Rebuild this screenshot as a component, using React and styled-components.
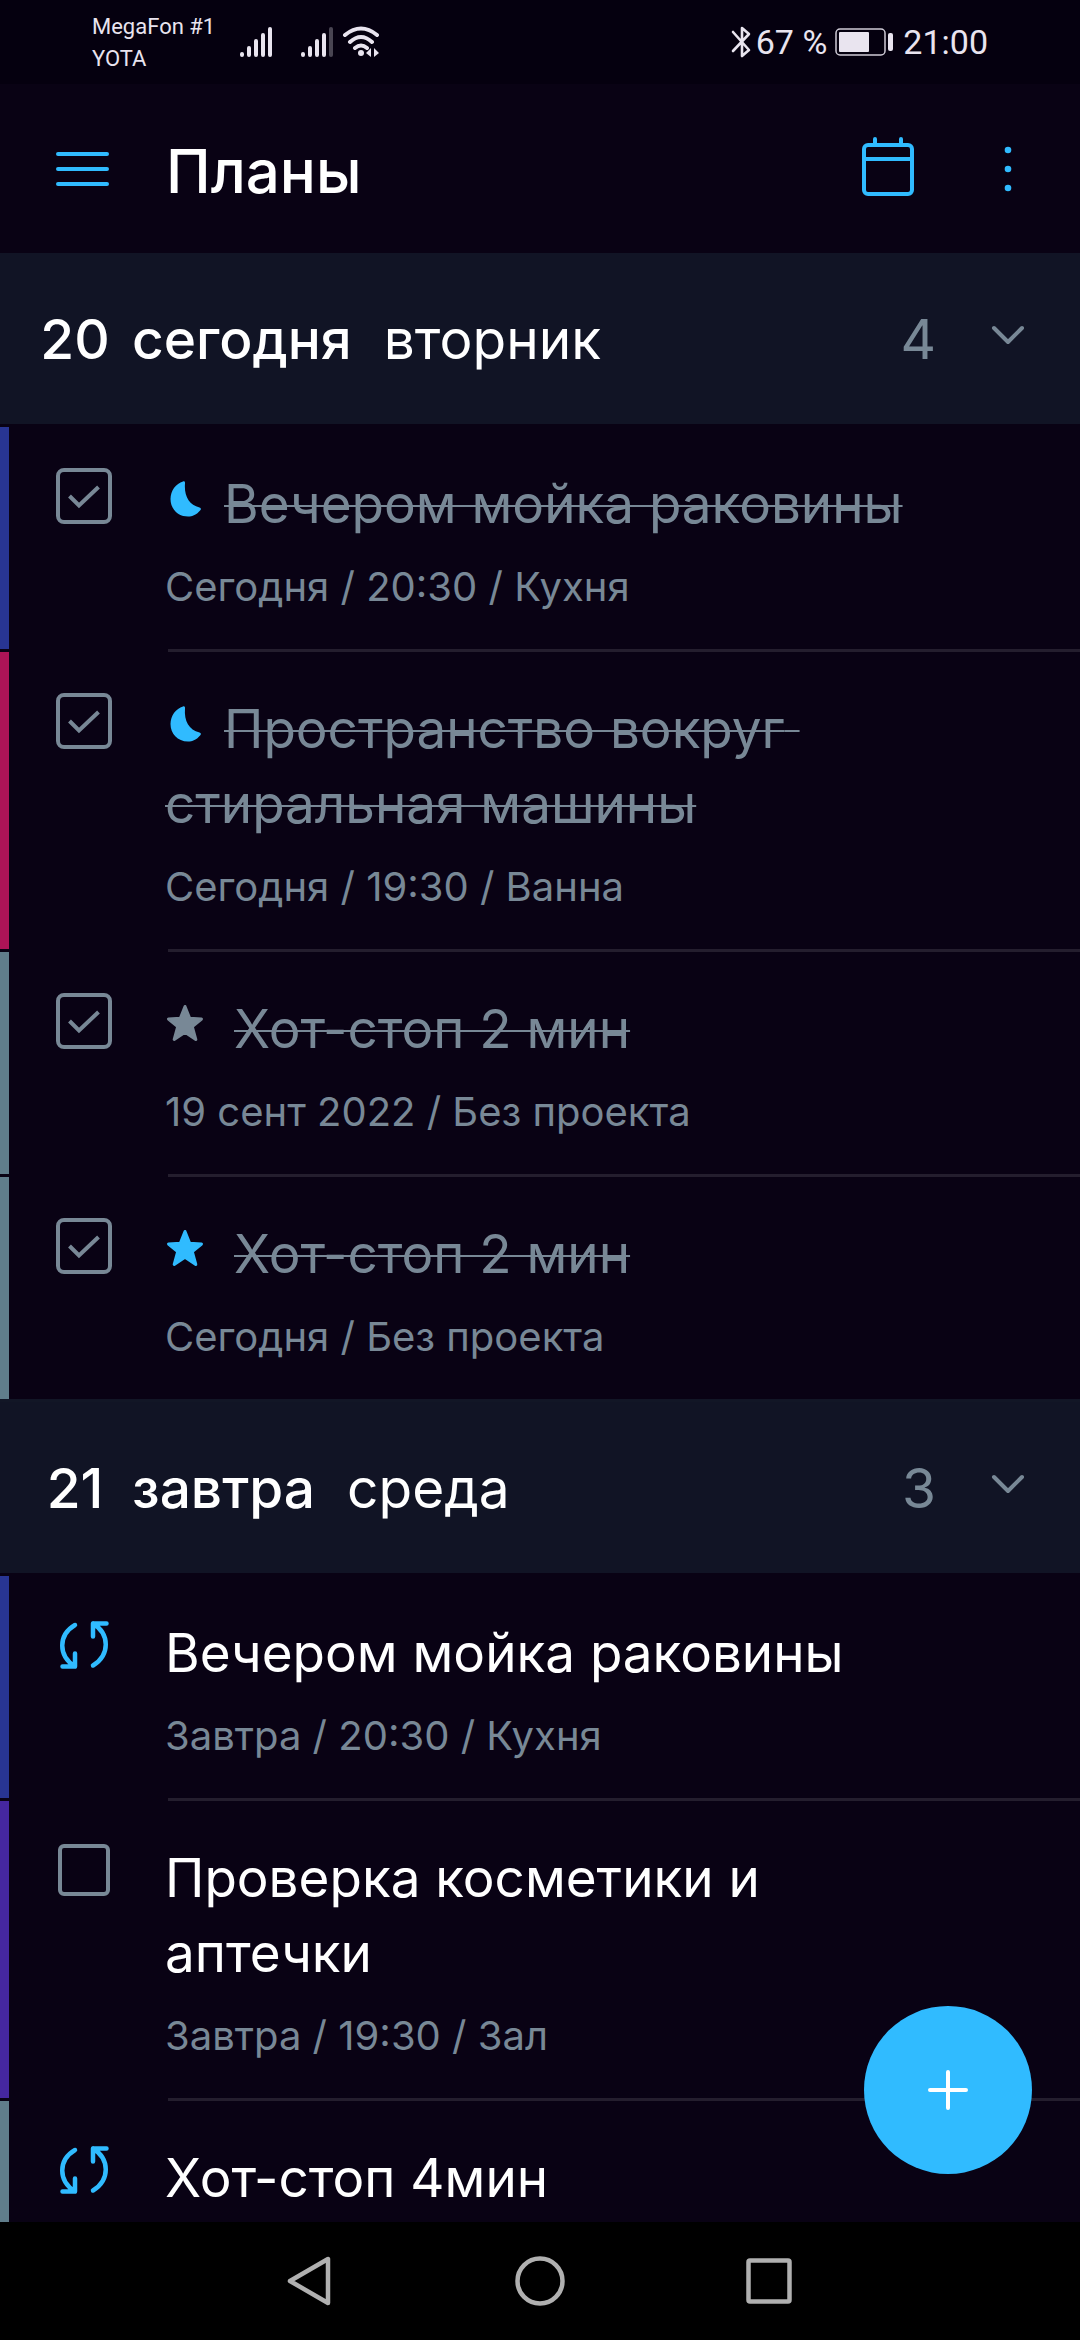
import React, { useState } from 'react'
import styled, { createGlobalStyle } from 'styled-components';

const accent = '#30bbff';
const muted = '#788896';

const days = [
  {
    id: 'today',
    number: 20,
    name: 'сегодня',
    weekday: 'вторник',
    count: 4,
    tasks: [
      { id: 1, title: 'Вечером мойка раковины', meta: 'Сегодня / 20:30 / Кухня', color: '#283593', done: true, mark: 'moon' },
      { id: 2, title: 'Пространство вокруг стиральная машины', meta: 'Сегодня / 19:30 / Ванна', color: '#ad1457', done: true, mark: 'moon' },
      { id: 3, title: 'Хот-стоп 2 мин', meta: '19 сент 2022 / Без проекта', color: '#607d8b', done: true, mark: 'star', markColor: muted },
      { id: 4, title: 'Хот-стоп 2 мин', meta: 'Сегодня / Без проекта', color: '#607d8b', done: true, mark: 'star' },
    ],
  },
  {
    id: 'tomorrow',
    number: 21,
    name: 'завтра',
    weekday: 'среда',
    count: 3,
    tasks: [
      { id: 5, title: 'Вечером мойка раковины', meta: 'Завтра / 20:30 / Кухня', color: '#283593', repeat: true },
      { id: 6, title: 'Проверка косметики и аптечки', meta: 'Завтра / 19:30 / Зал', color: '#4527a0' },
      { id: 7, title: 'Хот-стоп 4мин', color: '#607d8b', repeat: true },
    ],
  },
];


function Signal({ weak }) {
  return (
    <svg width="34" height="34" viewBox="0 0 34 34" fill="none" stroke="#e9e4ef" strokeWidth="4" strokeLinecap="round">
      <path d="M3 29V30M10 23V30M17 16V30M24 10V30" />
      <path d="M31 4V30" opacity={weak ? 0.3 : 1} />
    </svg>
  )
}

function Wifi() {
  return (
    <svg width="38" height="34" viewBox="0 0 38 34" fill="none" stroke="#e9e4ef" strokeWidth="4" strokeLinecap="round">
      <path d="M3 10Q19 -3 35 10M8 17Q19 7 30 17M13 23Q19 18 25 23" />
      <circle cx="19" cy="28" r="3" fill="#e9e4ef" stroke="none" />
      <path d="M24 28L29 23V32ZM32 23V32L37 28Z" fill="#e9e4ef" stroke="none" />
    </svg>
  )
}

function Bluetooth() {
  return (
    <svg width="20" height="34" viewBox="0 0 20 34" fill="none" stroke="#e9e4ef" strokeWidth="2.6" strokeLinejoin="round" strokeLinecap="round">
      <path d="M2 7L18 25L11 31V3L18 9L2 26" />
    </svg>
  )
}

function Battery() {
  return (
    <svg width="60" height="28" viewBox="0 0 60 28" fill="none">
      <rect x="1" y="1" width="49" height="26" rx="4" stroke="#cfcad6" strokeWidth="1.5" />
      <rect x="4" y="4" width="30" height="20" rx="1" fill="#e9e4ef" />
      <rect x="53" y="5" width="5" height="18" rx="2" fill="#e9e4ef" />
    </svg>
  )
}

function Mark({ type, color }) {
  if (type === 'moon') {
    return (
      <Moon viewBox="0 0 32 36" fill={color}>
        <path d="M13 .5C14.500 0 15.200 1 15 2.500C14 15 19 24 29.500 26.500C31 27 31.300 28 30.300 29.300C26.500 34 22.500 35.500 18 35.500C7.500 35.500 .5 27.500 .5 18C.5 9.500 6 2.500 13 .5Z" />
      </Moon>
    )
  }
  return (
    <Star viewBox="0 0 38 38" fill={color} stroke={color} strokeWidth="3" strokeLinejoin="round">
      <path d="M19 2.500L23.700 14.300L35.500 15L26.300 22.700L29.800 35.500L19 28.300L8.200 35.500L11.700 22.700L2.500 15L14.300 14.300Z" />
    </Star>
  )
}

function Task({ task }) {
  const [done, setDone] = useState(Boolean(task.done));
  const id = `task-${task.id}`;

  return (
    <Row>
      <Stripe $color={task.color} />
      <Control>
        {task.repeat ? (
          <IconButton id={id} aria-label="Повтор">
            <svg width="52" height="52" viewBox="0 0 52 52" fill="none" stroke={accent} strokeWidth="4.5" strokeLinecap="round" strokeLinejoin="round">
              <path d="M17 6C0 16 0 37 17 47.500M4.500 47.500H17V34.500" />
              <path d="M35 46.500C52 36 52 15 35 4.500M48.500 4.500H35V17.500" />
            </svg>
          </IconButton>
        ) : (
          <>
            <Checkbox id={id} type="checkbox" checked={done} onChange={() => setDone(!done)} />
            {done && (
              <Check viewBox="0 0 56 56" fill="none" stroke={muted} strokeWidth="4">
                <path d="M13.500 28L23 37.500L42.500 19" />
              </Check>
            )}
          </>
        )}
      </Control>
      <Body>
        <Title htmlFor={id} $done={done}>
          {task.mark && <Mark type={task.mark} color={task.markColor || accent} />}
          <span>{task.title}</span>
        </Title>
        {task.meta && <Meta>{task.meta}</Meta>}
      </Body>
    </Row>
  )
}

function Day({ day }) {
  const [open, setOpen] = useState(true);

  return (
    <section>
      <DayHeader>
        <DayTitle>
          <DayNumber>{day.number}</DayNumber>
          <strong>{day.name}</strong>
          <span>{day.weekday}</span>
        </DayTitle>
        <Count>{day.count}</Count>
        <IconButton aria-label="Свернуть" aria-expanded={open} onClick={() => setOpen(!open)}>
          <svg width="36" height="28" viewBox="0 0 36 28" fill="none" stroke={muted} strokeWidth="4" strokeLinecap="round" strokeLinejoin="round">
            <path d="M4 3L18 17L32 3" />
          </svg>
        </IconButton>
      </DayHeader>
      {open && (
        <List>
          {day.tasks.map((task) => (
            <Task key={task.id} task={task} />
          ))}
        </List>
      )}
    </section>
  )
}

function App() {
  return (
    <Screen>
      <GlobalStyle />
      <StatusBar>
        <Carriers>
          <span>MegaFon #1</span>
          <span>YOTA</span>
        </Carriers>
        <Signals>
          <Signal />
          <Signal weak />
        </Signals>
        <Wifi />
        <Spacer />
        <Bluetooth />
        <Percent>67 %</Percent>
        <Battery />
        <Clock>21:00</Clock>
      </StatusBar>

      <AppBar>
        <IconButton aria-label="Меню">
          <svg width="54" height="40" viewBox="0 0 54 40" fill="none" stroke={accent} strokeWidth="4" strokeLinecap="round">
            <path d="M2 5H51M2 20H51M2 35H51" />
          </svg>
        </IconButton>
        <Heading>Планы</Heading>
        <IconButton aria-label="Календарь">
          <svg width="52" height="66" viewBox="0 0 52 66" fill="none" stroke={accent} strokeWidth="4" strokeLinecap="round">
            <rect x="2" y="9" width="48" height="49" rx="4" />
            <path d="M2 23H50M13 3V8M39 3V8" />
          </svg>
        </IconButton>
        <IconButton aria-label="Ещё">
          <svg width="8" height="48" viewBox="0 0 8 48" fill={accent}>
            <circle cx="4" cy="5" r="3.3" />
            <circle cx="4" cy="24" r="3.3" />
            <circle cx="4" cy="43" r="3.3" />
          </svg>
        </IconButton>
      </AppBar>

      <Content>
        {days.map((day) => (
          <Day key={day.id} day={day} />
        ))}
        <AddButton aria-label="Добавить">
          <svg width="44" height="44" viewBox="0 0 44 44" fill="none" stroke="#fff" strokeWidth="4" strokeLinecap="round">
            <path d="M22 4V40M4 22H40" />
          </svg>
        </AddButton>
      </Content>

      <NavBar>
        <NavButton aria-label="Назад">
          <svg width="52" height="52" viewBox="0 0 52 52">
            <path d="M43 4V48L5 26Z" />
          </svg>
        </NavButton>
        <NavButton aria-label="Домой">
          <svg width="52" height="52" viewBox="0 0 52 52">
            <circle cx="26" cy="26" r="22.500" />
          </svg>
        </NavButton>
        <NavButton aria-label="Недавние">
          <svg width="52" height="52" viewBox="0 0 52 52">
            <rect x="5.500" y="5.500" width="41" height="41" rx="1.500" />
          </svg>
        </NavButton>
      </NavBar>
    </Screen>
  )
}


const GlobalStyle = createGlobalStyle`
  *{
    box-sizing: border-box;
  }

  body{
    margin: 0;
    background: #090214;
    color: #fff;
    font-family: Inter, Roboto, sans-serif;
  }

  button{
    padding: 0;
    border: none;
    background: none;
    cursor: pointer;
  }

  svg{
    display: block;
    flex: none;
  }
`;

const Screen = styled.div`
  display: flex;
  flex-direction: column;
  height: 100vh;
`;

const StatusBar = styled.div`
  display: flex;
  align-items: center;
  height: 84px;
  padding: 0 92px;
  background: #05000f;
  color: #e9e4ef;
  font-family: Roboto, sans-serif;
`;

const Carriers = styled.div`
  display: flex;
  flex-direction: column;
  margin-right: 24px;
  padding-top: 2px;
  font-size: 22px;
  line-height: 32px;
`;

const Signals = styled.div`
  display: flex;
  gap: 27px;
  margin-right: 8px;
`;

const Spacer = styled.div`
  flex: 1;
`;

const Percent = styled.span`
  margin: 0 8px 0 5px;
  font-size: 34px;
  line-height: 40px;
`;

const Clock = styled.span`
  margin-left: 8px;
  font-size: 34px;
  line-height: 40px;
`;

const AppBar = styled.header`
  display: flex;
  align-items: center;
  flex: none;
  height: 169px;
  padding: 0 68px 0 56px;
  gap: 56px;

  button:last-child{
    margin-left: 34px;
  }
`;

const Heading = styled.h1`
  flex: 1;
  margin: 0;
  padding-top: 4px;
  font-size: 60px;
  line-height: 72px;
  font-weight: 500;
`;

const Content = styled.main`
  position: relative;
  flex: 1;
  min-height: 0;
  overflow: hidden;

  section + section{
    border-top: 3px solid #121626;
  }
`;

const DayHeader = styled.div`
  display: flex;
  align-items: center;
  height: 171px;
  padding: 0 54px 0 40px;
  background: #111425;
`;

const DayTitle = styled.h2`
  display: flex;
  flex: 1;
  gap: 32px;
  margin: 0;
  font-size: 55px;
  line-height: 72px;
  font-weight: 400;

  strong{
    font-weight: 500;
  }
`;

const DayNumber = styled.span`
  width: 70px;
  margin-right: -10px;
  text-align: center;
  font-weight: 500;
`;

const Count = styled.span`
  margin-right: 54px;
  color: ${muted};
  font-size: 55px;
  line-height: 72px;
`;

const List = styled.ul`
  margin: 0;
  padding: 0;
  list-style: none;
`;

const Row = styled.li`
  display: flex;
  padding-top: 3px;
`;

const Stripe = styled.div`
  width: 9px;
  background: ${(props) => props.$color};
`;

const Control = styled.div`
  display: grid;
  place-items: center;
  width: 56px;
  height: 56px;
  margin: 41px 53px 0 47px;

  > *{
    grid-area: 1 / 1;
  }
`;

const IconButton = styled.button`
  display: block;
`;

const Checkbox = styled.input`
  appearance: none;
  width: 52px;
  height: 52px;
  margin: 0;
  border: 4px solid ${muted};
  border-radius: 6px;

  &:checked{
    width: 56px;
    height: 56px;
    border-radius: 8px;
  }
`;

const Check = styled.svg`
  width: 56px;
  height: 56px;
  pointer-events: none;
`;

const Body = styled.div`
  flex: 1;
  padding: 40px 120px 35px 0;
  position: relative;

  li + li &::before{
    content: '';
    position: absolute;
    top: -3px;
    left: 3px;
    right: 0;
    height: 3px;
    background: #241e2e;
  }
`;

const Title = styled.label`
  display: block;
  color: ${(props) => (props.$done ? muted : '#fff')};
  font-size: 53px;
  line-height: 75px;
  white-space: pre-wrap;

  span{
    text-decoration: ${(props) => (props.$done ? 'line-through 2px' : 'none')};
  }
`;

const Moon = styled.svg`
  display: inline-block;
  width: 32px;
  height: 36px;
  margin: 0 22px 0 5px;
  vertical-align: 6px;
`;

const Star = styled.svg`
  display: inline-block;
  width: 38px;
  height: 38px;
  margin: 0 30px 0 1px;
  vertical-align: 6px;
`;

const Meta = styled.div`
  margin-top: 18px;
  color: ${muted};
  font-size: 40px;
  line-height: 54px;
`;

const AddButton = styled.button`
  position: absolute;
  right: 48px;
  bottom: 48px;
  display: grid;
  place-items: center;
  width: 168px;
  height: 168px;
  border-radius: 50%;

  &&{
    background: ${accent};
  }
`;

const NavBar = styled.nav`
  display: flex;
  justify-content: center;
  align-items: center;
  flex: none;
  height: 118px;
  gap: 177px;
  background: #000;
`;

const NavButton = styled.button`
  svg{
    fill: none;
    stroke: #b0b0b0;
    stroke-width: 4.5;
    stroke-linejoin: round;
  }
`;

export default App
